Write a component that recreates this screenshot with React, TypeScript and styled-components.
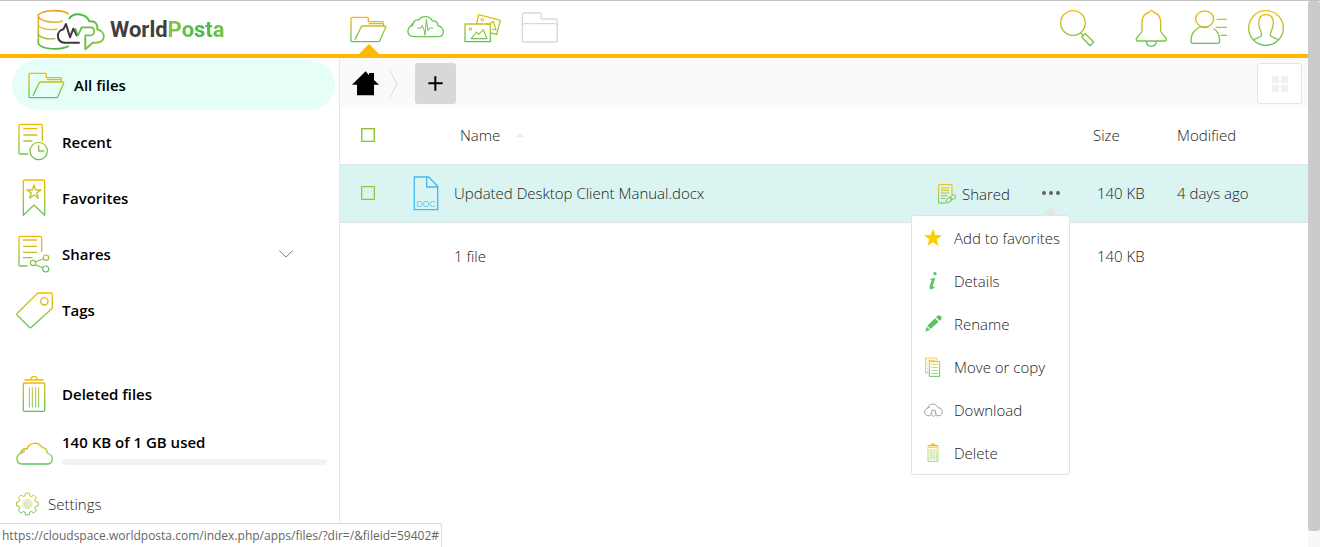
import React, { useId } from 'react';
import styled, { createGlobalStyle, css } from 'styled-components';

const GlobalStyle = createGlobalStyle`
  *, *::before, *::after { box-sizing: border-box; }
  body {
    margin: 0;
    background: #fff;
    color: #222;
    font-family: 'Open Sans', 'Noto Sans', sans-serif;
    font-size: 15px;
    font-weight: 300;
    line-height: 20px;
  }
  button, a, input { font: inherit; color: inherit; }
`;

/* ---------- icons ---------- */

type IconProps = {
  w: number;
  h: number;
  stroke?: string;
  strokeWidth?: number;
  children: React.ReactNode;
};

const Svg = styled.svg`
  display: block;
  flex: none;
`;

/* Line icon on a grid of three units per pixel, stroked amber to green. */
function Icon({ w, h, stroke, strokeWidth = 4, children }: IconProps) {
  const id = useId();
  return (
    <Svg
      width={w}
      height={h}
      viewBox={`0 0 ${w * 3} ${h * 3}`}
      fill="none"
      stroke={stroke ?? `url(#${id})`}
      strokeWidth={strokeWidth}
      strokeLinejoin="round"
      aria-hidden="true"
    >
      <defs>
        <linearGradient id={id} gradientUnits="userSpaceOnUse" x1="0" y1="0" x2="0" y2={h * 3}>
          <stop offset="0.05" stopColor="#fbb800" />
          <stop offset="0.55" stopColor="#a5c33c" />
          <stop offset="1" stopColor="#55c463" />
        </linearGradient>
      </defs>
      {children}
    </Svg>
  );
}

const FolderOpenIcon = () => (
  <Icon w={37} h={27}>
    <path d="M3 76V7q0-3 3-3h46q3 0 3 3v10h42q3 0 3 3v10M56 23h41M15 71l19-39q1-2 4-2h66q4 0 3 4L90 73q-2 4-5 4H6q-3 0-3-3" />
  </Icon>
);

const CloudPulseIcon = () => (
  <Icon w={37} h={24} stroke="#6cc45a">
    <g transform="translate(0 -2)">
      <path d="M22 64C6 64 2 54 3 46c1-9 7-14 14-15C17 18 26 12 35 14 44 1 68-1 76 17c10-2 17 6 17 14 10 3 16 10 16 18 0 10-8 15-17 15z" />
      <path strokeWidth="3" d="M9 35q3-11 14-13M30 38h12l4-8 6 16 2 14 4-48 5 34 4-8h12" />
    </g>
  </Icon>
);

const PhotosIcon = () => (
  <Icon w={37} h={30}>
    <path d="M3 33h76v53H3zM38 31l6-26 65 17-11 42-17-4" />
    <circle cx="19" cy="48" r="4" strokeWidth="3" />
    <circle cx="55" cy="20" r="4" strokeWidth="3" />
    <path strokeWidth="3.5" d="M22 77l15-20 7 7 14-14 11 27zM66 31l8 4 14-10 8 26-12-3" />
  </Icon>
);

const FolderIcon = () => (
  <Icon w={38} h={31} stroke="#d9d9d9">
    <path d="M10 3h46q5 0 5 5v13h43q5 0 5 5v58q0 6-6 6H10q-6 0-6-6V9q0-6 6-6zM4 42q0-7 6-7h92q7 0 7 7" />
  </Icon>
);

const SearchIcon = () => (
  <Icon w={36} h={38}>
    <circle cx="42" cy="42" r="37" />
    <path d="M66 72l7 8M68 84l11-10 25 25-11 11z" />
  </Icon>
);

const BellIcon = () => (
  <Icon w={33} h={38}>
    <path d="M49 4c-2 0-4 2-6 5-14 5-22 17-22 30v27c0 8-15 14-17 24-1 5 1 6 5 6h80c4 0 6-1 5-6-2-10-17-16-17-24V39c0-13-8-25-22-30-2-3-4-5-6-5zM34 97c1 20 29 20 30 0" />
  </Icon>
);

const ContactsIcon = () => (
  <Icon w={37} h={35}>
    <ellipse cx="44" cy="27" rx="27" ry="24" />
    <path d="M33 50C14 57 3 72 3 92q0 8 6 8h74q6 0 6-6c0-20-7-32-19-38M33 50q11 5 22 0M80 28h31M77 52h34M92 76h19" />
  </Icon>
);

const UserIcon = () => (
  <Icon w={38} h={38}>
    <circle cx="57" cy="57" r="52" />
    <path d="M20 92c8-5 22-7 24-13 2-8-9-20-9-36 0-16 6-26 22-26s22 10 22 26c0 16-11 28-9 36 2 6 16 8 24 13" />
  </Icon>
);

const RecentIcon = () => (
  <Icon w={32} h={38}>
    <path d="M31 93H7q-4 0-4-4V8q0-4 4-4h62q4 0 4 4v46M16 17h42M16 36h42M16 54h27" />
    <circle cx="62" cy="84" r="26" />
    <path d="M62 66v18h17" />
  </Icon>
);

const FavoritesIcon = () => (
  <Icon w={26} h={38}>
    <path d="M7 109V6q0-3 3-3h58q3 0 3 3v103L39 78z" />
    <path d="M39 18l5 15h16L47 42l5 15-13-9-13 9 5-15-13-9h16z" />
  </Icon>
);

const SharesIcon = () => (
  <Icon w={32} h={38}>
    <path d="M29 93H7q-4 0-4-4V8q0-4 4-4h60q4 0 4 4v42M15 15h42M15 34h42M15 52h42M15 68h28" />
    <g strokeWidth="3.5">
      <circle cx="45" cy="84" r="8" />
      <circle cx="84" cy="68" r="8" />
      <circle cx="83" cy="102" r="9" />
      <path d="M53 81l23-10M52 89l23 10" />
    </g>
  </Icon>
);

const TagIcon = () => (
  <Icon w={37} h={37}>
    <path d="M69 3h36q4 0 4 4v38q0 3-2 5L46 106q-3 3-6 0L4 70q-3-3 0-6L63 5q2-2 6-2z" />
    <circle cx="85" cy="28" r="11" />
  </Icon>
);

const TrashIcon = () => (
  <Icon w={26} h={38}>
    <path d="M10 24h58q3 0 3 3v78q0 4-4 4H11q-4 0-4-4V27q0-3 3-3zM10 15h58M29 14q1-10 10-10t10 10" />
    <path strokeWidth="3" d="M25 37v60M34 37v60M44 37v60M53 37v60" />
  </Icon>
);

const CloudIcon = () => (
  <Icon w={37} h={23}>
    <path d="M20 66C8 66 3 58 3 50c0-8 5-14 11-16-1-8 8-16 19-13C38 2 66-4 79 17c8 0 14 6 15 16 10 4 15 10 15 17 0 9-6 16-17 16zM17 34q3-6 10-7" />
  </Icon>
);

function gearPath(cx: number, cy: number, outer: number, inner: number) {
  const points: string[] = [];
  for (let tooth = 0; tooth < 8; tooth++) {
    const centre = (tooth * Math.PI) / 4;
    [
      [inner, -0.3],
      [outer, -0.17],
      [outer, 0.17],
      [inner, 0.3],
    ].forEach(([r, shift]) => {
      const a = centre + shift;
      points.push(`${(cx + r * Math.sin(a)).toFixed(1)} ${(cy - r * Math.cos(a)).toFixed(1)}`);
    });
  }
  return `M${points.join('L')}Z`;
}

const GearIcon = () => (
  <Icon w={23} h={24} strokeWidth={3}>
    <path d={gearPath(34, 36, 33, 25)} />
    <circle cx="34" cy="36" r="14" strokeWidth="2" strokeDasharray="5 2" />
    <circle cx="34" cy="36" r="9" strokeWidth="2" />
    <circle cx="34" cy="36" r="3" strokeWidth="2" />
  </Icon>
);

const HomeIcon = () => (
  <Svg width="27" height="25" viewBox="0 0 81 75" fill="#000" aria-hidden="true">
    <path d="M41 1L0 41h15v32h51V41h15L66 27V6H51v7z" />
  </Svg>
);

const CrumbIcon = () => (
  <Icon w={9} h={28} stroke="#d8d8d8" strokeWidth={3}>
    <path d="M2 2l23 40L2 82" />
  </Icon>
);

const PlusIcon = () => (
  <Icon w={15} h={15} stroke="#000" strokeWidth={6}>
    <path d="M22 1v43M1 22h43" />
  </Icon>
);

const GridIcon = () => (
  <Svg width="16" height="16" viewBox="0 0 16 16" fill="#f0f0f0" aria-hidden="true">
    <path d="M0 0h7v7H0zM9 0h7v7H9zM0 9h7v7H0zM9 9h7v7H9z" />
  </Svg>
);

const ChevronIcon = () => (
  <Icon w={14} h={8} stroke="#777" strokeWidth={3}>
    <path d="M1 2l20 19L41 2" />
  </Icon>
);

const SortIcon = () => (
  <Svg width="8" height="4" viewBox="0 0 8 4" fill="#ececec" aria-hidden="true">
    <path d="M0 4l4-4 4 4z" />
  </Svg>
);

const DocIcon = () => (
  <Svg width="26" height="35" viewBox="0 0 78 105" fill="none" stroke="#46b8f0" strokeWidth="4" aria-hidden="true">
    <path d="M4 3h43l27 28v70H4zM41 4v29h32" />
    <text x="10" y="92" fill="#74c5ec" stroke="none" fontFamily="'Liberation Sans', sans-serif" fontSize="26" fontWeight="400">
      DOC
    </text>
  </Svg>
);

const SharedIcon = () => (
  <Icon w={18} h={20} strokeWidth={3}>
    <path d="M25 57H2V2h40v30M9 12h24M9 19h24M9 27h24M9 35h20M9 43h12" />
    <rect x="24" y="42" width="18" height="11" rx="5" transform="rotate(-35 33 48)" />
    <rect x="36" y="34" width="17" height="11" rx="5" transform="rotate(-35 45 39)" />
  </Icon>
);

const DotsIcon = () => (
  <Svg width="20" height="6" viewBox="0 0 20 6" fill="#606060" aria-hidden="true">
    <circle cx="3" cy="3" r="2" />
    <circle cx="10" cy="3" r="2" />
    <circle cx="17" cy="3" r="2" />
  </Svg>
);

const StarIcon = () => (
  <Svg width="18" height="17" viewBox="0 0 54 51" fill="#ffcc00" aria-hidden="true">
    <path d="M27 0l7 18 20 1-16 12 6 20-17-11-17 11 6-20L0 19l20-1z" />
  </Svg>
);

const InfoIcon = () => (
  <Svg width="8" height="18" viewBox="0 0 24 54" fill="#5cc35e" aria-hidden="true">
    <circle cx="18" cy="5" r="5" />
    <path d="M3 21l16-4-8 26q-1 4 6 0l1 2q-6 7-12 7-6-1-4-9l6-18q1-4-5-2z" />
  </Svg>
);

const PencilIcon = () => (
  <Svg width="17" height="17" viewBox="0 0 51 51" fill="#5cc35e" aria-hidden="true">
    <path d="M36 4q3-4 7-3 6 2 7 8 0 3-3 6l-3 2L33 7zM30 10l11 10-24 22L7 32zM5 35l10 9-14 6z" />
  </Svg>
);

const CopyIcon = () => (
  <Icon w={16} h={20} strokeWidth={3}>
    <path opacity="0.7" d="M10 48H2V3h34v8M8 10h22M6 18h3M6 26h3M6 34h3M6 42h3" />
    <path d="M13 14h31v44H13z" />
    <path opacity="0.7" d="M19 22h20M19 31h20M19 40h20M19 49h20" />
  </Icon>
);

const DownloadIcon = () => (
  <Icon w={19} h={14} stroke="#aaa099" strokeWidth={3}>
    <path d="M20 38h-7C4 38 2 32 2 27c0-6 4-10 9-11C14 2 34-3 42 14c8 0 13 6 13 13 0 6-3 11-10 11h-8M8 18q4-6 10-5M23 22v10h-4l10 9 9-9h-4V22z" />
  </Icon>
);

const SmallTrashIcon = () => (
  <Icon w={12} h={19} strokeWidth={2}>
    <path strokeWidth="4" d="M2 8h32M12 7q6-8 12 0" />
    <path d="M3 13h30v42H3z" />
    <path opacity="0.7" d="M9 18v32M13 18v32M18 18v32M23 18v32M28 18v32" />
  </Icon>
);

function LogoMark() {
  return (
    <Svg width="70" height="44" viewBox="0 0 210 132" fill="none" strokeWidth="6" strokeLinejoin="round" strokeLinecap="round" aria-hidden="true">
      <defs>
        <linearGradient id="disk" gradientUnits="userSpaceOnUse" x1="0" y1="6" x2="0" y2="124">
          <stop offset="0" stopColor="#ee9a1c" />
          <stop offset="0.4" stopColor="#dcc130" />
          <stop offset="1" stopColor="#4cb748" />
        </linearGradient>
        <linearGradient id="cloud" gradientUnits="userSpaceOnUse" x1="100" y1="20" x2="200" y2="110">
          <stop offset="0" stopColor="#3fb54a" />
          <stop offset="1" stopColor="#8cc63f" />
        </linearGradient>
      </defs>
      <g stroke="url(#disk)" strokeWidth="5">
        <path d="M97 18C84 5 24 4 8 20q-3 3-1 6c10 17 54 20 72 13M7 24v83c12 18 66 20 90 8" />
        <path strokeWidth="4" d="M7 52c10 12 36 15 56 11M7 80c10 10 30 14 50 12" />
      </g>
      <path stroke="#3a3a3c" d="M129 104H84C60 101 60 68 82 64L90 48 102 88 112 62 122 82" />
      <g stroke="url(#cloud)">
        <path d="M100 31c14-20 52-14 60 9 18-3 26 10 24 24 28 8 26 40-6 40h-8l-22 20V94" />
        <path strokeWidth="5" d="M118 62l8 20 11-24h27c14 0 14 24 0 24h-16v14" />
      </g>
    </Svg>
  );
}

/* ---------- page frame ---------- */

const Window = styled.div`
  display: flex;
  height: 100vh;
  border-top: 1px solid #c2c2c2;
  overflow: hidden;
`;

const App = styled.div`
  display: flex;
  flex: 1;
  flex-direction: column;
  min-width: 0;
`;

const ScrollTrack = styled.div`
  display: flex;
  width: 12px;
  padding-bottom: 16px;
  background: #f8f8f8;
`;

const ScrollThumb = styled.div`
  flex: 1;
  border-radius: 3px;
  background: #cbcbcb;
`;

const Header = styled.header`
  display: flex;
  align-items: stretch;
  height: 57px;
  padding-right: 14px;
  border-bottom: 4px solid #ffb700;
`;

const Brand = styled.a`
  display: flex;
  align-items: center;
  gap: 4px;
  width: 340px;
  padding: 4px 0 0 36px;
  text-decoration: none;
`;

const BrandName = styled.span`
  color: #3f3f41;
  font-family: Roboto, 'Open Sans', sans-serif;
  font-size: 22px;
  font-weight: 700;
  line-height: 28px;
`;

const BrandAccent = styled.span`
  background: linear-gradient(90deg, #8dc63f, #3fba4e 60%, #7cc242);
  background-clip: text;
  color: transparent;
`;

const AppNav = styled.nav`
  display: flex;
  flex: 1;
`;

const iconSlot = css`
  display: flex;
  align-items: center;
  justify-content: center;
  width: 57px;
  padding: 0;
  border: 0;
  background: none;
`;

const AppLink = styled.a<{ $active?: boolean }>`
  ${iconSlot}
  position: relative;
  padding-top: ${({ $active }) => ($active ? '4px' : '0')};
  ${({ $active }) =>
    $active &&
    css`
      &::after {
        content: '';
        position: absolute;
        bottom: 0;
        border: 10px solid transparent;
        border-top-width: 0;
        border-bottom-color: #ffb700;
      }
    `}
`;

const HeaderButton = styled.button<{ $spaced?: boolean }>`
  ${iconSlot}
  margin-right: ${({ $spaced }) => ($spaced ? '18px' : '0')};
`;

const Body = styled.div`
  display: flex;
  flex: 1;
  min-height: 0;
`;

/* ---------- sidebar ---------- */

const Sidebar = styled.aside`
  flex: none;
  width: 340px;
  border-right: 1px solid #e6e6e6;
`;

const NavList = styled.ul`
  margin: 0;
  padding: 0;
  list-style: none;
`;

const NavRow = styled.li<{ $separated?: boolean }>`
  display: flex;
  align-items: center;
  margin-top: ${({ $separated }) => ($separated ? '28px' : '0')};
  padding-right: 46px;
`;

const NavLink = styled.a<{ $active?: boolean }>`
  display: flex;
  flex: 1;
  align-items: center;
  gap: 10px;
  height: 56px;
  padding-left: 16px;
  color: #000;
  font-weight: 600;
  text-decoration: none;
  ${({ $active }) =>
    $active &&
    css`
      height: 50px;
      margin: 2px -42px 4px 12px;
      border-radius: 25px;
      background: #e6fef8;
    `}
`;

const NavIcon = styled.span`
  display: flex;
  justify-content: center;
  width: 36px;
`;

const PlainButton = styled.button`
  display: flex;
  align-items: center;
  padding: 0;
  border: 0;
  background: none;
`;

const Quota = styled.div`
  display: flex;
  align-items: flex-end;
  gap: 10px;
  padding: 10px 12px 0 16px;
`;

const QuotaLabel = styled.label`
  display: flex;
  flex: 1;
  flex-direction: column;
  gap: 7px;
  color: #000;
  font-weight: 600;
`;

const QuotaBar = styled.progress`
  display: block;
  width: 100%;
  height: 6px;
  border: 0;
  border-radius: 3px;
  overflow: hidden;
  appearance: none;
  background: #f2f2f2;
  &::-webkit-progress-bar { background: #f2f2f2; }
  &::-webkit-progress-value { background: #55c463; }
`;

const SettingsButton = styled(PlainButton)`
  gap: 9px;
  margin: 27px 0 0 16px;
`;

/* ---------- file list ---------- */

const Main = styled.main`
  flex: 1;
  min-width: 0;
`;

const Toolbar = styled.div`
  display: flex;
  align-items: center;
  height: 49px;
  padding: 2px 6px 0 12px;
  background: #fafafa;
`;

const HomeLink = styled.a`
  margin-right: 10px;
`;

const AddButton = styled(PlainButton)`
  justify-content: center;
  width: 41px;
  height: 41px;
  margin-left: 17px;
  border-radius: 3px;
  background: #d8d8d8;
`;

const ViewButton = styled(PlainButton)`
  justify-content: center;
  width: 45px;
  height: 41px;
  margin-left: auto;
  border: 1px solid #e4e4e4;
  border-radius: 3px;
  background: #fff;
`;

const Table = styled.table`
  width: 100%;
  border-collapse: collapse;
  table-layout: fixed;
  text-align: left;
`;

const Row = styled.tr<{ $selected?: boolean; $plain?: boolean; $head?: boolean }>`
  height: ${({ $head }) => ($head ? '57px' : '58px')};
  border-bottom: ${({ $plain }) => ($plain ? '0' : '1px solid #e2e5e5')};
  background: ${({ $selected }) => ($selected ? '#daf4f2' : 'transparent')};
`;

const HeadCell = styled.th<{ $width?: number; $indent?: number }>`
  width: ${({ $width }) => ($width ? `${$width}px` : 'auto')};
  padding: 0 0 0 ${({ $indent = 0 }) => $indent}px;
  font-weight: 300;
`;

const Cell = styled.td<{ $indent?: number; $low?: boolean }>`
  padding: ${({ $low }) => ($low ? '10px' : '0')} 0 0 ${({ $indent = 0 }) => $indent}px;
`;

const Check = styled.input`
  display: block;
  width: 14px;
  height: 14px;
  margin: 0;
  appearance: none;
  border: 1px solid #8cc63f;
  box-shadow: inset 0 0 0 1px #cfe8ae;
`;

const SortButton = styled(PlainButton)`
  gap: 16px;
`;

const NameLine = styled.div`
  display: flex;
  align-items: center;
`;

const FileLink = styled.a`
  flex: 1;
  text-decoration: none;
`;

const SharedButton = styled(PlainButton)`
  gap: 6px;
  margin-right: 31px;
  padding-top: 2px;
`;

const MenuAnchor = styled.div`
  position: relative;
  margin-right: 32px;
`;

const Menu = styled.ul`
  position: absolute;
  z-index: 2;
  top: 25px;
  right: -9px;
  width: 159px;
  margin: 0;
  padding: 0;
  border: 1px solid #e2e2e2;
  border-radius: 3px;
  background: #fff;
  list-style: none;
  &::before {
    content: '';
    position: absolute;
    right: 9px;
    bottom: 100%;
    border: 9px solid transparent;
    border-top-width: 0;
    border-bottom-color: #e4e6e6;
  }
`;

const MenuItem = styled(PlainButton)`
  gap: 11px;
  width: 100%;
  height: 43px;
  padding-left: 11px;
`;

const MenuIcon = styled.span`
  display: flex;
  justify-content: center;
  width: 20px;
`;

const StatusUrl = styled.div`
  position: fixed;
  z-index: 3;
  bottom: 0;
  left: 0;
  height: 24px;
  padding: 0 2px;
  border: 1px solid #dcdcdc;
  border-width: 1px 1px 0 0;
  border-top-right-radius: 3px;
  background: #fff;
  color: #666;
  font-size: 12px;
  font-weight: 400;
  line-height: 23px;
`;

const navItems = [
  { label: 'All files', icon: <FolderOpenIcon />, active: true },
  { label: 'Recent', icon: <RecentIcon /> },
  { label: 'Favorites', icon: <FavoritesIcon /> },
  { label: 'Shares', icon: <SharesIcon />, expandable: true },
  { label: 'Tags', icon: <TagIcon /> },
  { label: 'Deleted files', icon: <TrashIcon />, separated: true },
];

const menuItems = [
  { label: 'Add to favorites', icon: <StarIcon /> },
  { label: 'Details', icon: <InfoIcon /> },
  { label: 'Rename', icon: <PencilIcon /> },
  { label: 'Move or copy', icon: <CopyIcon /> },
  { label: 'Download', icon: <DownloadIcon /> },
  { label: 'Delete', icon: <SmallTrashIcon /> },
];

export default function FilesPage() {
  return (
    <Window>
      <GlobalStyle />
      <App>
        <Header>
          <Brand href="#">
            <LogoMark />
            <BrandName>
              World<BrandAccent>Posta</BrandAccent>
            </BrandName>
          </Brand>
          <AppNav aria-label="Apps">
            <AppLink href="#" $active aria-label="Files"><FolderOpenIcon /></AppLink>
            <AppLink href="#" aria-label="Activity"><CloudPulseIcon /></AppLink>
            <AppLink href="#" aria-label="Photos"><PhotosIcon /></AppLink>
            <AppLink href="#" aria-label="Folders"><FolderIcon /></AppLink>
          </AppNav>
          <HeaderButton $spaced aria-label="Search"><SearchIcon /></HeaderButton>
          <HeaderButton aria-label="Notifications"><BellIcon /></HeaderButton>
          <HeaderButton aria-label="Contacts"><ContactsIcon /></HeaderButton>
          <HeaderButton aria-label="Account"><UserIcon /></HeaderButton>
        </Header>
        <Body>
          <Sidebar>
            <NavList>
              {navItems.map((item) => (
                <NavRow key={item.label} $separated={item.separated}>
                  <NavLink href="#" $active={item.active}>
                    <NavIcon>{item.icon}</NavIcon>
                    {item.label}
                  </NavLink>
                  {item.expandable && (
                    <PlainButton aria-label="Expand shares"><ChevronIcon /></PlainButton>
                  )}
                </NavRow>
              ))}
            </NavList>
            <Quota>
              <NavIcon><CloudIcon /></NavIcon>
              <QuotaLabel>
                140 KB of 1 GB used
                <QuotaBar value={0} max={100} />
              </QuotaLabel>
            </Quota>
            <SettingsButton><GearIcon />Settings</SettingsButton>
          </Sidebar>
          <Main>
            <Toolbar>
              <HomeLink href="#" aria-label="Home"><HomeIcon /></HomeLink>
              <CrumbIcon />
              <AddButton aria-label="New"><PlusIcon /></AddButton>
              <ViewButton aria-label="Grid view"><GridIcon /></ViewButton>
            </Toolbar>
            <Table>
              <thead>
                <Row $head>
                  <HeadCell $width={73} $indent={21}>
                    <Check type="checkbox" aria-label="Select all files" />
                  </HeadCell>
                  <HeadCell $width={41} />
                  <HeadCell $indent={6}>
                    <SortButton>Name<SortIcon /></SortButton>
                  </HeadCell>
                  <HeadCell $width={84}>Size</HeadCell>
                  <HeadCell $width={131}>Modified</HeadCell>
                </Row>
              </thead>
              <tbody>
                <Row $selected>
                  <Cell $indent={21}>
                    <Check type="checkbox" aria-label="Select Updated Desktop Client Manual.docx" />
                  </Cell>
                  <Cell><DocIcon /></Cell>
                  <Cell>
                    <NameLine>
                      <FileLink href="#">Updated Desktop Client Manual.docx</FileLink>
                      <SharedButton><SharedIcon />Shared</SharedButton>
                      <MenuAnchor>
                        <PlainButton aria-label="Actions"><DotsIcon /></PlainButton>
                        <Menu>
                          {menuItems.map((item) => (
                            <li key={item.label}>
                              <MenuItem>
                                <MenuIcon>{item.icon}</MenuIcon>
                                {item.label}
                              </MenuItem>
                            </li>
                          ))}
                        </Menu>
                      </MenuAnchor>
                    </NameLine>
                  </Cell>
                  <Cell $indent={4}>140 KB</Cell>
                  <Cell>4 days ago</Cell>
                </Row>
              </tbody>
              <tfoot>
                <Row $plain>
                  <Cell colSpan={2} />
                  <Cell $low>1 file</Cell>
                  <Cell $low $indent={4}>140 KB</Cell>
                  <Cell />
                </Row>
              </tfoot>
            </Table>
          </Main>
        </Body>
      </App>
      <ScrollTrack>
        <ScrollThumb />
      </ScrollTrack>
      <StatusUrl>https://cloudspace.worldposta.com/index.php/apps/files/?dir=/&amp;fileid=59402#</StatusUrl>
    </Window>
  );
}
